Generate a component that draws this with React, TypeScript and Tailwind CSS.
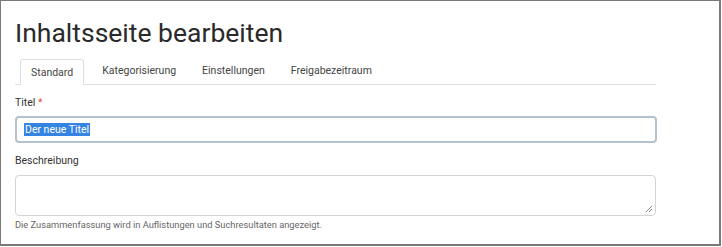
const tabs = ["Standard", "Kategorisierung", "Einstellungen", "Freigabezeitraum"];

const App = () => {
  return (
    <div className="w-[722px] h-[247px] bg-white font-['Roboto',sans-serif] text-[#333]">
      <div className="w-[721px] h-[246px] border border-[#7a7a7a] border-r-2 border-b-2 pl-[14px] pt-[14px]">
        {/* Title */}
        <h1 className="text-[26.5px] leading-[35px] font-normal text-[#2a2a2a]">
          Inhaltsseite bearbeiten
        </h1>

        {/* Tabs */}
        <div className="mt-[9px] w-[641px] flex items-end border-b border-[#dedede] h-[26px] pl-[5px]">
          {tabs.map((tab, i) => (
            <div
              key={tab}
              className={
                i === 0
                  ? "h-[26px] px-[10px] flex items-center text-[10.5px] text-[#444] border border-b-0 border-[#dedede] rounded-t-[3px] bg-white -mb-px mr-[8px]"
                  : "h-[26px] px-[10px] flex items-center text-[10.5px] text-[#444] mr-[6px]"
              }
            >
              {tab}
            </div>
          ))}
        </div>

        {/* Titel */}
        <div className="mt-[11px] text-[10.5px] leading-[14px] text-[#333]">
          Titel <span className="text-[#d9534f]">*</span>
        </div>
        <div className="mt-[6px] w-[642px] h-[27px] rounded-[4px] border-2 border-[#b3c2cd] bg-white flex items-center pl-[7px]">
          <span className="bg-[#3584e4] text-white text-[10.5px] leading-[13px] px-[1px]">Der neue Titel</span>
        </div>

        {/* Beschreibung */}
        <div className="mt-[11px] text-[10.5px] leading-[14px] text-[#333]">Beschreibung</div>
        <div className="relative mt-[7px] w-[641px] h-[41px] rounded-[4px] border border-[#d4d4d4] bg-white">
          <svg className="absolute right-[2px] bottom-[2px]" width="8" height="8" viewBox="0 0 8 8">
            <path d="M7 1 L1 7 M7 4 L4 7" stroke="#888" strokeWidth="1" fill="none" />
          </svg>
        </div>
        <div className="mt-[3px] text-[9.3px] leading-[12px] text-[#666]">
          Die Zusammenfassung wird in Auflistungen und Suchresultaten angezeigt.
        </div>
      </div>
    </div>
  );
};

export default App;
